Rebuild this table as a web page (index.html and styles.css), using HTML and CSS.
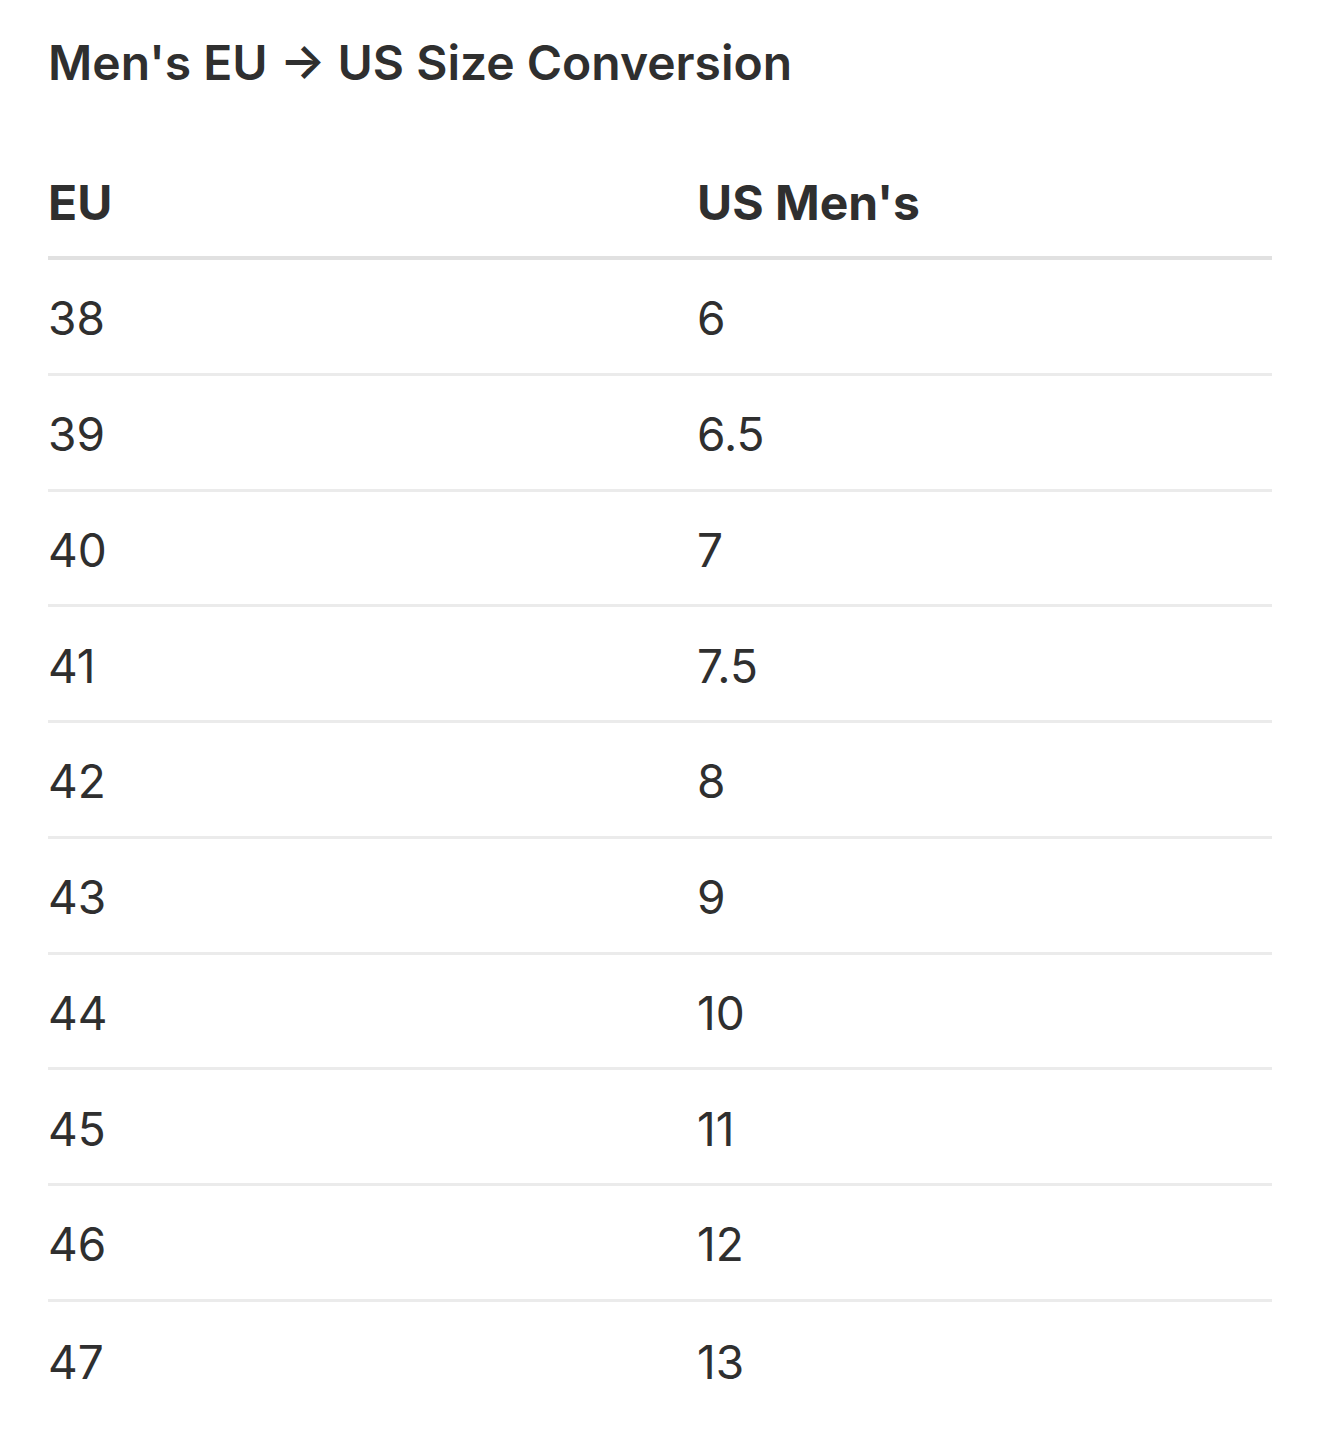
FILE: index.html
```html
<!DOCTYPE html>
<html lang="en">
<head>
<meta charset="utf-8">
<title>Men's EU → US Size Conversion</title>
<link rel="stylesheet" href="styles.css">
</head>
<body>
<main class="page">
  <h1 class="title">Men's EU → US Size Conversion</h1>
  <div class="table">
    <div class="row head"><div class="cell">EU</div><div class="cell">US Men's</div></div>
    <div class="row"><div class="cell">38</div><div class="cell">6</div></div>
    <div class="row"><div class="cell">39</div><div class="cell">6.5</div></div>
    <div class="row"><div class="cell">40</div><div class="cell">7</div></div>
    <div class="row"><div class="cell">41</div><div class="cell">7.5</div></div>
    <div class="row"><div class="cell">42</div><div class="cell">8</div></div>
    <div class="row"><div class="cell">43</div><div class="cell">9</div></div>
    <div class="row"><div class="cell">44</div><div class="cell">10</div></div>
    <div class="row"><div class="cell">45</div><div class="cell">11</div></div>
    <div class="row"><div class="cell">46</div><div class="cell">12</div></div>
    <div class="row last"><div class="cell">47</div><div class="cell">13</div></div>
  </div>
</main>
</body>
</html>
```
FILE: styles.css
```css
html, body {
  margin: 0;
  padding: 0;
  background: #ffffff;
}
body {
  font-family: Inter, "Noto Sans", "Liberation Sans", sans-serif;
  color: #2f2f2f;
}
.page {
  padding: 35px 48px 0 48px;
}
.title {
  margin: 0 0 55px 0;
  font-size: 48px;
  line-height: 56px;
  font-weight: 600;
  letter-spacing: 0;
}
.table {
  display: flex;
  flex-direction: column;
}
.row {
  display: grid;
  grid-template-columns: 649px 1fr;
  align-items: center;
  box-sizing: border-box;
  height: 115.75px;
  border-bottom: 3px solid #ebebeb;
  font-size: 46px;
  padding-top: 4px;
}
.row.head {
  height: 114px;
  border-bottom: 4px solid #e1e1e1;
  font-size: 48px;
  font-weight: 700;
}
.row.last {
  border-bottom: none;
}
.cell {
  line-height: 56px;
}
```
